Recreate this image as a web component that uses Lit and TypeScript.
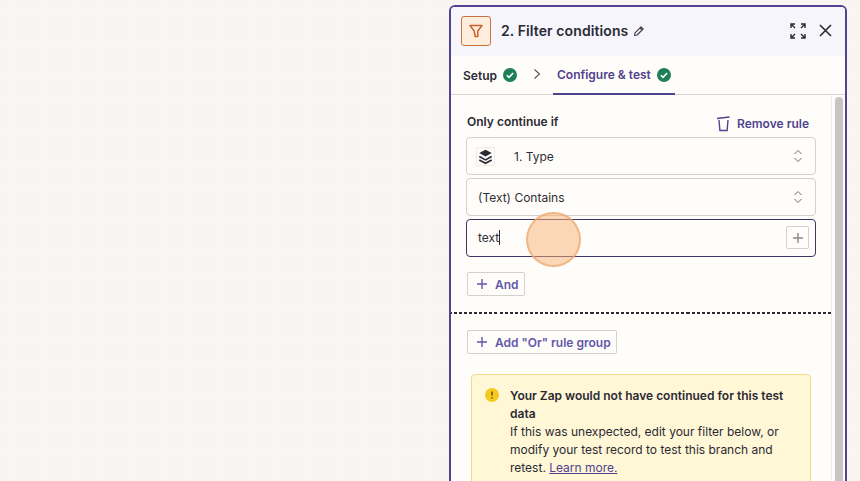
import { LitElement, html, css, svg } from 'lit';
import { customElement } from 'lit/decorators.js';

const check = html`<svg class="check" viewBox="0 0 14 14">
  <circle cx="7" cy="7" r="7" fill="#1f7f58"></circle>
  <path d="M3.8 7.2l2.2 2.2 4.2-4.4" fill="none" stroke="#fff" stroke-width="1.6"></path>
</svg>`;

const updown = html`<svg class="updown" viewBox="0 0 10 14">
  <path d="M1.5 5l3.5-3.500L8.500 5M1.500 9l3.500 3.500L8.500 9" fill="none" stroke="#6f6d6a" stroke-width="1"></path>
</svg>`;

const plus = svg`<path d="M6 1v10M1 6h10" fill="none" stroke="currentColor" stroke-width="1.400"></path>`;

@customElement('app-root')
export class AppRoot extends LitElement {
  static styles = css`
    :host {
      display: flex;
      justify-content: flex-end;
      position: relative;
      width: 860px;
      height: 481px;
      overflow: hidden;
      box-sizing: border-box;
      padding: 5px 13px 0 0;
      background-color: #f8f5f2;
      background-image: radial-gradient(circle, #e8e3de 0.7px, transparent 1px);
      background-size: 11px 11px;
      font-family: Inter, 'Liberation Sans', sans-serif;
      color: #2b2a35;
    }

    .panel {
      width: 398px;
      height: 500px;
      box-sizing: border-box;
      border: 2px solid #50438f;
      border-radius: 6px;
      background: #fffdf9;
      display: flex;
      flex-direction: column;
      flex: none;
    }

    .head {
      height: 49px;
      flex: none;
      display: flex;
      align-items: center;
      padding: 0 13px 2px 10px;
      box-sizing: border-box;
      background: #f6f5fc;
      border-radius: 4px 4px 0 0;
    }

    .logo {
      width: 30px;
      height: 30px;
      box-sizing: border-box;
      border: 1px solid #c9743d;
      border-radius: 3px;
      background: #ffeedd;
      display: flex;
      align-items: center;
      justify-content: center;
      margin-right: 10px;
    }

    .logo svg {
      width: 18px;
      height: 18px;
    }

    .title {
      font-size: 14px;
      font-weight: 600;
      letter-spacing: 0.1px;
      margin-right: 5px;
    }

    .pencil {
      width: 12px;
      height: 12px;
    }

    .spacer {
      flex: 1;
    }

    .expand {
      width: 16px;
      height: 16px;
      margin-right: 13px;
    }

    .close {
      width: 13px;
      height: 13px;
    }

    .tabs {
      height: 39px;
      flex: none;
      box-sizing: border-box;
      display: flex;
      align-items: stretch;
      padding-left: 12px;
      border-bottom: 1px solid #d6d3cf;
      font-size: 12px;
      font-weight: 600;
    }

    .tab {
      display: flex;
      align-items: center;
      gap: 6px;
    }

    .check {
      width: 14px;
      height: 14px;
    }

    .chevron {
      width: 8px;
      height: 12px;
      margin: -2px 12px 0 16px;
      align-self: center;
    }

    .tab.active {
      color: #50438f;
      padding: 0 4px;
      margin-bottom: -1px;
      border-bottom: 2px solid #50438f;
    }

    .body {
      flex: 1;
      display: flex;
      min-height: 0;
    }

    .content {
      width: 381px;
      flex: none;
      box-sizing: border-box;
      border-right: 1px solid #eeebe6;
      padding: 19px 0 0;
    }

    .rule {
      padding: 0 15px;
    }

    .rule-head {
      display: flex;
      justify-content: space-between;
      align-items: flex-start;
      height: 18px;
      line-height: 16px;
      padding: 0 7px 0 1px;
      margin-bottom: 5px;
      font-size: 12px;
      font-weight: 600;
    }

    .remove {
      display: flex;
      align-items: center;
      gap: 6px;
      height: 18px;
      margin-top: 1px;
      color: #50438f;
    }

    .remove svg {
      width: 15px;
      height: 16px;
    }

    .field {
      height: 38px;
      box-sizing: border-box;
      border: 1px solid #d4d1cc;
      border-radius: 4px;
      margin-bottom: 3px;
      display: flex;
      align-items: center;
      padding: 0 11px;
      font-size: 12px;
      color: #2f2d36;
    }

    .field.focus {
      border-color: #3d3668;
      margin-top: 3px;
      padding: 0 6px 1px 11px;
    }

    .updown {
      width: 10px;
      height: 14px;
      margin-left: auto;
      margin-right: 1px;
    }

    .stack {
      width: 19px;
      height: 19px;
      box-sizing: border-box;
      border: 1px solid #eeebe6;
      border-radius: 2px;
      margin: 0 19px 0 -2px;
      display: flex;
      align-items: center;
      justify-content: center;
    }

    .stack svg {
      width: 17px;
      height: 17px;
    }

    .caret {
      width: 1px;
      height: 15px;
      background: #2b2a35;
    }

    .add-token {
      width: 23px;
      height: 23px;
      box-sizing: border-box;
      border: 1px solid #d4d1cc;
      border-radius: 2px;
      margin-left: auto;
      display: flex;
      align-items: center;
      justify-content: center;
      color: #8b8985;
    }

    .add-token svg {
      width: 12px;
      height: 12px;
    }

    .btn {
      display: inline-flex;
      align-items: center;
      gap: 7px;
      height: 24px;
      box-sizing: border-box;
      border: 1px solid #d4d1cc;
      border-radius: 2px;
      padding: 0 5px 0 8px;
      font-size: 12px;
      font-weight: 600;
      color: #6257ab;
    }

    .btn svg {
      width: 12px;
      height: 12px;
    }

    .and {
      margin: 12px 0 0 1px;
    }

    .divider {
      margin-top: 16px;
      border-top: 2px dashed #2b2a35;
      border-image: repeating-linear-gradient(90deg, #2b2a35 0 3px, transparent 3px 5px) 2;
    }

    .or {
      margin: 16px 0 0 16px;
    }

    .notice {
      margin: 20px 0 0 20px;
      width: 340px;
      box-sizing: border-box;
      display: flex;
      gap: 11px;
      padding: 12px 12px 0 13px;
      height: 130px;
      background: #fff7d6;
      border: 1px solid #eddc8c;
      border-radius: 4px;
      font-size: 12px;
      line-height: 18px;
      color: #2b2a35;
    }

    .notice svg {
      width: 14px;
      height: 14px;
      flex: none;
      margin-top: 1px;
    }

    .notice b {
      display: block;
      font-weight: 600;
    }

    .notice a {
      color: #50438f;
      text-decoration: underline;
    }

    .scroll {
      width: 8px;
      margin: 2px 0 0 3px;
      background: #c6c5c3;
      border-radius: 4px 4px 0 0;
    }

    .spot {
      position: absolute;
      left: 526px;
      top: 212px;
      width: 55px;
      height: 55px;
      box-sizing: border-box;
      border-radius: 50%;
      background: rgba(250, 178, 118, 0.5);
      border: 2px solid rgba(238, 165, 105, 0.65);
    }
  `;

  render() {
    return html`
      <div class="panel">
        <div class="head">
          <div class="logo">
            <svg viewBox="0 0 18 18">
              <path d="M3 3.500h12l-4.200 5.500v5.500H8.200L7.200 9z" fill="none" stroke="#c9622a" stroke-width="1.500" stroke-linejoin="round"></path>
            </svg>
          </div>
          <span class="title">2. Filter conditions</span>
          <svg class="pencil" viewBox="0 0 12 12">
            <path d="M1.500 10.500l.5-2.600 6-6 2.100 2.100-6 6zM7 3l2.100 2.100" fill="none" stroke="#3a3842" stroke-width="1.100" stroke-linejoin="round"></path>
          </svg>
          <div class="spacer"></div>
          <svg class="expand" viewBox="0 0 16 16">
            <path d="M1 5V1h4M1 1l4 4M15 5V1h-4M15 1l-4 4M1 11v4h4M1 15l4-4M15 11v4h-4M15 15l-4-4" fill="none" stroke="#2b2a35" stroke-width="1.400"></path>
          </svg>
          <svg class="close" viewBox="0 0 13 13">
            <path d="M1 1l11 11M12 1L1 12" fill="none" stroke="#2b2a35" stroke-width="1.600"></path>
          </svg>
        </div>

        <div class="tabs">
          <div class="tab">Setup ${check}</div>
          <svg class="chevron" viewBox="0 0 8 12">
            <path d="M1.500 1.500L6.500 6l-5 4.500" fill="none" stroke="#55524f" stroke-width="1.100"></path>
          </svg>
          <div class="tab active">Configure &amp; test ${check}</div>
        </div>

        <div class="body">
          <div class="content">
            <div class="rule">
              <div class="rule-head">
                <span>Only continue if</span>
                <span class="remove">
                  <svg viewBox="0 0 15 16">
                    <path d="M1 2.500L13.500 1M3 4l.9 10.500h7.200L12 4" fill="none" stroke="#50438f" stroke-width="1.400"></path>
                  </svg>
                  Remove rule
                </span>
              </div>
              <div class="field">
                <span class="stack">
                  <svg viewBox="0 0 15 15">
                    <path d="M7.500 1.500l5.500 3-5.500 3-5.500-3z" fill="#2b2a35"></path>
                    <path d="M2 7.500l5.500 3 5.500-3M2 10.500l5.500 3 5.500-3" fill="none" stroke="#2b2a35" stroke-width="1.500"></path>
                  </svg>
                </span>
                1. Type ${updown}
              </div>
              <div class="field">(Text) Contains ${updown}</div>
              <div class="field focus">
                text<span class="caret"></span>
                <span class="add-token"><svg viewBox="0 0 12 12">${plus}</svg></span>
              </div>
              <div class="btn and"><svg viewBox="0 0 12 12">${plus}</svg>And</div>
            </div>
            <div class="divider"></div>
            <div class="btn or"><svg viewBox="0 0 12 12">${plus}</svg>Add "Or" rule group</div>
            <div class="notice">
              <svg viewBox="0 0 14 14">
                <circle cx="7" cy="7" r="7" fill="#f6c91e"></circle>
                <path d="M7 3.500v4M7 9.300v1.300" fill="none" stroke="#5c4a00" stroke-width="1.400"></path>
              </svg>
              <div>
                <b>Your Zap would not have continued for this test data</b>
                <div>If this was unexpected, edit your filter below, or</div>
                <div>modify your test record to test this branch and</div>
                <div>retest. <a>Learn more.</a></div>
              </div>
            </div>
          </div>
          <div class="scroll"></div>
        </div>
      </div>
      <div class="spot"></div>
    `;
  }
}
